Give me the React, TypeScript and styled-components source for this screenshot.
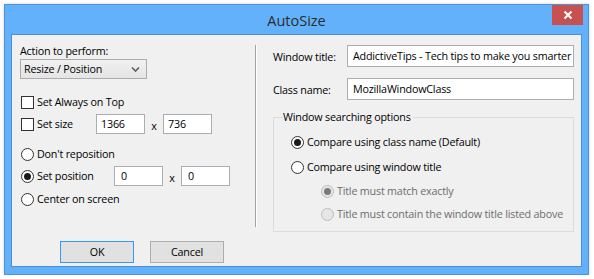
import React from "react";
import styled, { createGlobalStyle } from "styled-components";

const Global = createGlobalStyle`
  html, body { margin: 0; padding: 0; background: #ffffff; }
  body {
    font-family: "Open Sans", "Noto Sans", sans-serif;
    font-size: 10.75px;
    letter-spacing: -0.2px;
    color: #000;
  }
  * { box-sizing: border-box; }
`;

const Window = styled.div`
  margin: 4px 0 0 4px;
  width: 585px;
  height: 271px;
  background: #63b1fa;
  border: 1px solid #4f92d6;
  box-shadow: 0 0 3px rgba(0, 0, 0, 0.18);
  display: flex;
  flex-direction: column;
`;

const TitleBar = styled.div`
  height: 29px;
  display: grid;
  grid-template-columns: 1fr auto 1fr;
  align-items: start;
`;

const Title = styled.div`
  grid-column: 2;
  font-size: 14.5px;
  letter-spacing: 0;
  line-height: 20px;
  margin-top: 6px;
  color: #2b2b2b;
`;

const CloseButton = styled.div`
  grid-column: 3;
  justify-self: end;
  margin-right: 5px;
  width: 31px;
  height: 20px;
  background: #c75050;
  display: flex;
  align-items: center;
  justify-content: center;
`;

const Content = styled.div`
  margin: 0 6px 7px 6px;
  flex: 1;
  background: #f0f0f0;
  border: 1px solid #4b8fd4;
  display: flex;
  flex-direction: column;
`;

const Main = styled.div`
  display: flex;
`;

const LeftColumn = styled.div`
  flex: none;
  width: 243px;
  padding: 8px 0 0 8px;
  display: flex;
  flex-direction: column;
`;

const Separator = styled.div`
  flex: none;
  width: 1px;
  height: 182px;
  margin-top: 10px;
  background: #a0a0a0;
  box-shadow: 1px 0 0 #ffffff;
`;

const RightColumn = styled.div`
  flex: 1;
  min-width: 0;
  padding: 10px 7px 0 17px;
  display: flex;
  flex-direction: column;
`;

const Label = styled.div`
  line-height: 16px;
`;

const Select = styled.div`
  width: 127px;
  height: 20px;
  border: 1px solid #acacac;
  background: linear-gradient(#f0f0f0, #e5e5e5);
  display: flex;
  align-items: center;
  justify-content: space-between;
  padding: 0 6px 0 3px;
`;

const Row = styled.div<{ $mt: number; $h?: number; $indent?: number }>`
  display: flex;
  align-items: center;
  height: ${(p) => p.$h ?? 16}px;
  margin-top: ${(p) => p.$mt}px;
  margin-left: ${(p) => p.$indent ?? 0}px;
`;

const OptionLabel = styled.span<{ $w?: number; $disabled?: boolean }>`
  margin-left: 3px;
  ${(p) => (p.$w ? `width: ${p.$w}px;` : "")}
  color: ${(p) => (p.$disabled ? "#6d6d6d" : "#000")};
  line-height: 16px;
  white-space: nowrap;
  flex: none;
`;

const CheckBox = styled.span`
  width: 13px;
  height: 13px;
  margin-left: 1px;
  border: 1px solid #333333;
  background: #ffffff;
  flex: none;
`;

const Radio = styled.span<{ $checked?: boolean; $disabled?: boolean }>`
  width: 13px;
  height: 13px;
  margin-left: 1px;
  border-radius: 50%;
  border: 1px solid ${(p) => (p.$disabled ? "#bcbcbc" : "#333333")};
  background: ${(p) => (p.$disabled ? "#e6e6e6" : "#ffffff")};
  flex: none;
  display: flex;
  align-items: center;
  justify-content: center;
  &::after {
    content: "";
    display: ${(p) => (p.$checked ? "block" : "none")};
    width: 7px;
    height: 7px;
    border-radius: 50%;
    background: ${(p) => (p.$disabled ? "#7a7a7a" : "#1a1a1a")};
  }
`;

const TextInput = styled.div<{ $w: number; $h?: number; $pl?: number }>`
  width: ${(p) => p.$w}px;
  height: ${(p) => p.$h ?? 20}px;
  border: 1px solid #abadb3;
  background: #ffffff;
  padding-left: ${(p) => p.$pl ?? 4}px;
  display: flex;
  align-items: center;
  white-space: nowrap;
  overflow: hidden;
  flex: none;
`;

const Times = styled.span`
  width: 18px;
  text-align: center;
  padding-top: 3px;
  flex: none;
`;

const FieldRow = styled.div<{ $mt: number }>`
  display: flex;
  align-items: center;
  margin-top: ${(p) => p.$mt}px;
`;

const FieldLabel = styled.span`
  width: 74px;
  flex: none;
  padding-top: 1px;
  white-space: nowrap;
`;

const GroupBox = styled.fieldset`
  margin: 9px 0 0 0;
  padding: 0 0 9px 16px;
  border: 1px solid #dcdcdc;
  min-width: 0;
`;

const Legend = styled.legend`
  margin-left: -8px;
  padding: 0 2px 0 1px;
  line-height: 16px;
`;

const ButtonRow = styled.div`
  display: flex;
  gap: 16px;
  padding-left: 48px;
  margin-top: 9px;
`;

const Button = styled.div<{ $default?: boolean }>`
  width: 74px;
  height: 22px;
  border: 1px solid ${(p) => (p.$default ? "#3399ff" : "#adadad")};
  background: #e1e1e1;
  display: flex;
  align-items: center;
  justify-content: center;
`;

const Chevron = () => (
  <svg width="9" height="7" viewBox="0 0 9 7">
    <path d="M1 1.5 L4.5 5 L8 1.5" fill="none" stroke="#606060" strokeWidth="1.6" />
  </svg>
);

const CloseIcon = () => (
  <svg width="10" height="10" viewBox="0 0 10 10">
    <path d="M1.5 1.5 L8.5 8.5 M8.5 1.5 L1.5 8.5" stroke="#ffffff" strokeWidth="2" />
  </svg>
);

export default function App() {
  return (
    <>
      <Global />
      <Window>
        <TitleBar>
          <Title>AutoSize</Title>
          <CloseButton>
            <CloseIcon />
          </CloseButton>
        </TitleBar>
        <Content>
          <Main>
            <LeftColumn>
              <Label>Action to perform:</Label>
              <Select>
                <span>Resize / Position</span>
                <Chevron />
              </Select>
              <Row $mt={15}>
                <CheckBox />
                <OptionLabel>Set Always on Top</OptionLabel>
              </Row>
              <Row $mt={4} $h={20}>
                <CheckBox />
                <OptionLabel $w={59}>Set size</OptionLabel>
                <TextInput $w={49}>1366</TextInput>
                <Times>x</Times>
                <TextInput $w={49}>736</TextInput>
              </Row>
              <Row $mt={12}>
                <Radio />
                <OptionLabel>Don't reposition</OptionLabel>
              </Row>
              <Row $mt={4} $h={20}>
                <Radio $checked />
                <OptionLabel $w={77}>Set position</OptionLabel>
                <TextInput $w={49} $pl={6}>0</TextInput>
                <Times>x</Times>
                <TextInput $w={49} $pl={6}>0</TextInput>
              </Row>
              <Row $mt={5}>
                <Radio />
                <OptionLabel>Center on screen</OptionLabel>
              </Row>
            </LeftColumn>
            <Separator />
            <RightColumn>
              <FieldRow $mt={0}>
                <FieldLabel>Window title:</FieldLabel>
                <TextInput $w={227} $h={22} $pl={5}>
                  AddictiveTips - Tech tips to make you smarter
                </TextInput>
              </FieldRow>
              <FieldRow $mt={11}>
                <FieldLabel>Class name:</FieldLabel>
                <TextInput $w={227} $h={22} $pl={5}>
                  MozillaWindowClass
                </TextInput>
              </FieldRow>
              <GroupBox>
                <Legend>Window searching options</Legend>
                <Row $mt={9}>
                  <Radio $checked />
                  <OptionLabel>Compare using class name (Default)</OptionLabel>
                </Row>
                <Row $mt={9}>
                  <Radio />
                  <OptionLabel>Compare using window title</OptionLabel>
                </Row>
                <Row $mt={8} $indent={30}>
                  <Radio $checked $disabled />
                  <OptionLabel $disabled>Title must match exactly</OptionLabel>
                </Row>
                <Row $mt={7} $indent={30}>
                  <Radio $disabled />
                  <OptionLabel $disabled>Title must contain the window title listed above</OptionLabel>
                </Row>
              </GroupBox>
            </RightColumn>
          </Main>
          <ButtonRow>
            <Button $default>OK</Button>
            <Button>Cancel</Button>
          </ButtonRow>
        </Content>
      </Window>
    </>
  );
}
